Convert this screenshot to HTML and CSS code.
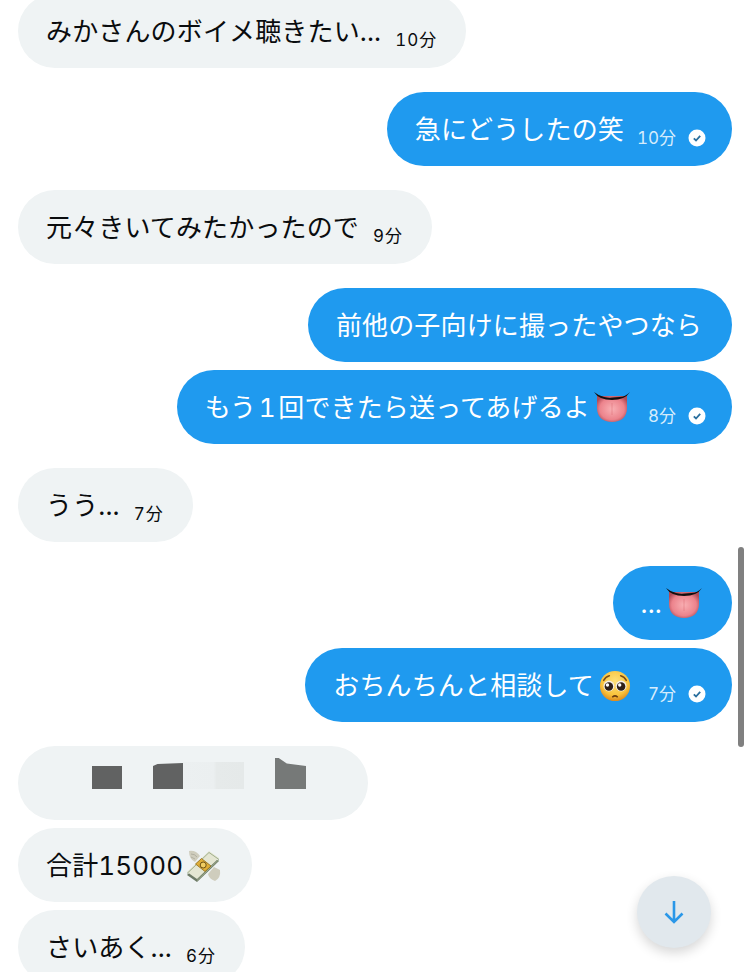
FILE: index.html
```html
<!DOCTYPE html>
<html lang="ja">
<head>
    <meta charset="UTF-8">
    <meta name="viewport" content="width=device-width, initial-scale=1.0">
    <title>メッセージ</title>
    <link rel="stylesheet" href="styles.css">
</head>
<body>
    <svg class="defs" width="0" height="0" aria-hidden="true">
        <defs>
            <radialGradient id="tongueFill" cx="50%" cy="50%" r="58%">
                <stop offset="0" stop-color="#f9b0b4"/>
                <stop offset="0.7" stop-color="#ec838c"/>
                <stop offset="1" stop-color="#b04c58"/>
            </radialGradient>
            <radialGradient id="faceFill" cx="50%" cy="35%" r="65%">
                <stop offset="0" stop-color="#fee27a"/>
                <stop offset="0.7" stop-color="#f9c33c"/>
                <stop offset="1" stop-color="#dc8a1e"/>
            </radialGradient>
            <symbol id="tongue" viewBox="0 0 36 32">
                <path d="M3 5H33V17C33 26 27 31 18 31S3 26 3 17Z" fill="url(#tongueFill)"/>
                <path d="M18 12V24" stroke="#d9666f" stroke-width="1" opacity=".45"/>
                <path d="M0 1Q5 5 10 6T18 6.500T26 6T36 1Q31 9 18 9T0 1Z" fill="#120e0e"/>
            </symbol>
            <symbol id="check" viewBox="0 0 18 18">
                <circle cx="9" cy="9" r="8.5" fill="#fff"/>
                <path d="M5.8 9.4L8 11.5L12.2 6.8" fill="none" stroke="#2a6f9e" stroke-width="1.8"/>
            </symbol>
        </defs>
    </svg>

    <main class="chat">
        <div class="row">
            <div class="bubble in">
                <span class="text">みかさんのボイメ聴きたい...</span>
                <span class="time">10分</span>
            </div>
        </div>
        <div class="row">
            <div class="bubble out">
                <span class="text">急にどうしたの笑</span>
                <span class="time">10分</span>
                <svg class="check"><use href="#check"/></svg>
            </div>
        </div>
        <div class="row">
            <div class="bubble in">
                <span class="text">元々きいてみたかったので</span>
                <span class="time">9分</span>
            </div>
        </div>
        <div class="row group">
            <div class="bubble out">
                <span class="text">前他の子向けに撮ったやつなら</span>
            </div>
            <div class="bubble out">
                <span class="text">もう&#8202;1&#8202;回できたら送ってあげるよ</span>
                <svg class="emoji tongue"><use href="#tongue"/></svg>
                <span class="time">8分</span>
                <svg class="check"><use href="#check"/></svg>
            </div>
        </div>
        <div class="row">
            <div class="bubble in">
                <span class="text">うう...</span>
                <span class="time">7分</span>
            </div>
        </div>
        <div class="row group">
            <div class="bubble out">
                <span class="text">...</span>
                <svg class="emoji tongue"><use href="#tongue"/></svg>
            </div>
            <div class="bubble out">
                <span class="text">おちんちんと相談して</span>
                <svg class="emoji face" viewBox="0 0 34 34">
                    <circle cx="17" cy="17" r="16" fill="url(#faceFill)"/>
                    <path d="M5 11Q7 7 11 6M29 11Q27 7 23 6" fill="none" stroke="#7a4a12" stroke-width="1.6" stroke-linecap="round"/>
                    <circle cx="10.500" cy="17" r="5.800" fill="#f4efe6"/>
                    <circle cx="23.500" cy="17" r="5.800" fill="#f4efe6"/>
                    <circle cx="10.500" cy="17.500" r="4.500" fill="#2f2118"/>
                    <circle cx="23.500" cy="17.500" r="4.500" fill="#2f2118"/>
                    <circle cx="9" cy="16" r="1.800" fill="#fff"/>
                    <circle cx="22" cy="16" r="1.800" fill="#fff"/>
                    <path d="M14.500 28.500Q17 26.500 19.500 28.500" fill="none" stroke="#6b3d10" stroke-width="1.600" stroke-linecap="round"/>
                </svg>
                <span class="time">7分</span>
                <svg class="check"><use href="#check"/></svg>
            </div>
        </div>
        <div class="row group">
            <div class="bubble in redacted">
                <span class="block"></span>
                <span class="block second"></span>
                <span class="smear"></span>
                <span class="block third"></span>
            </div>
            <div class="bubble in">
                <span class="text">合計15000</span>
                <svg class="emoji money" viewBox="0 0 36 34">
                    <path d="M4 2Q11 1 15 7L10 13Q4 10 4 2Z" fill="#cfcdbd"/>
                    <path d="M6 5Q10 5 12 8M6 8Q8 9 10 10" fill="none" stroke="#a9a798" stroke-width=".8"/>
                    <path d="M35 21Q36 29 30 32Q24 30 23 25L29 18Z" fill="#cfcdbd"/>
                    <path d="M2 26L24 5L34 12L12 33Z" fill="#6d7a66"/>
                    <path d="M2 23L24 2L34 9L12 30Z" fill="#e4e6d2"/>
                    <path d="M2 24.500L24 3.500L34 10.500L12 31.500" fill="none" stroke="#9fae8c" stroke-width="1"/>
                    <path d="M10.500 15L16.500 9.500L26 17L20 22.500Z" fill="#dfae38" stroke="#8d6a18" stroke-width=".8"/>
                    <circle cx="18.200" cy="16" r="3" fill="#f0cd62" stroke="#6e5214" stroke-width="1"/>
                </svg>
            </div>
            <div class="bubble in">
                <span class="text">さいあく...</span>
                <span class="time">6分</span>
            </div>
        </div>
    </main>

    <div class="scrollbar"></div>
    <button class="to-bottom" aria-label="一番下へ">
        <svg width="24" height="24" viewBox="0 0 24 24">
            <path d="M12 1V22M3.500 13.500L12 22L20.500 13.500" fill="none" stroke="#2a97e8" stroke-width="2.600"/>
        </svg>
    </button>
</body>
</html>
```

FILE: styles.css
```css
html, body {
    margin: 0;
    height: 972px;
    overflow: hidden;
    background: #fff;
}
body {
    position: relative;
    font-family: Inter, "Noto Sans CJK JP", sans-serif;
    font-variant-numeric: tabular-nums;
    color: #0a0c0e;
}
.defs {
    position: absolute;
}
.chat {
    display: flex;
    flex-direction: column;
    gap: 24px;
    margin-top: -6px;
    padding: 0 18px;
    width: 714px;
}
.row {
    display: flex;
    flex-direction: column;
    gap: 8px;
}
.bubble {
    display: flex;
    align-items: center;
    height: 74px;
    box-sizing: border-box;
    padding: 0 30px 0 28px;
    border-radius: 37px;
    width: fit-content;
}
.in {
    align-self: flex-start;
    background: #eff3f4;
    padding-right: 29px;
}
.out {
    align-self: flex-end;
    background: #1f9aef;
    color: #fff;
}
.text {
    margin-top: 2px;
    font-size: 26px;
    line-height: 34px;
    letter-spacing: 0.15px;
    white-space: nowrap;
}
.time {
    margin: 18px 0 0 14px;
    font-size: 17px;
    line-height: 20px;
    letter-spacing: 1px;
    white-space: nowrap;
}
.out .time {
    margin-left: 13px;
    letter-spacing: 0;
    color: #d5ecfc;
}
.check {
    width: 18px;
    height: 18px;
    margin: 18px -4px 0 12px;
}
.emoji {
    width: 34px;
    height: 34px;
    flex: none;
}
.tongue {
    width: 36px;
    height: 32px;
    margin: 0 0 0 4px;
}
.out .tongue + .time {
    margin-left: 18px;
}
.face {
    margin: 2px 0 0 5px;
    width: 32px;
    height: 32px;
}
.out .face + .time {
    margin-left: 17px;
}
.money {
    width: 36px;
    height: 34px;
    margin: 1px 2px 0 2px;
}
.redacted {
    width: 350px;
    padding: 0 0 31px 74px;
    align-items: flex-end;
}
.block {
    width: 30px;
    height: 23px;
    background: #616262;
    margin-right: 31px;
}
.block.second {
    height: 26px;
    margin-right: 0;
    clip-path: polygon(0 12%, 15% 4%, 100% 0, 100% 100%, 0 100%);
}
.smear {
    width: 61px;
    height: 27px;
    margin-right: 31px;
    background: linear-gradient(90deg, #ecf0f1 0, #ebeff0 50%, #e6eaea 55%, #e5e9e9 100%);
}
.block.third {
    width: 31px;
    height: 31px;
    background: #767978;
    clip-path: polygon(0 0, 12% 0, 38% 18%, 100% 26%, 100% 100%, 0 100%);
}
.scrollbar {
    position: absolute;
    left: 738px;
    top: 547px;
    width: 6px;
    height: 200px;
    border-radius: 3px;
    background: #808080;
}
.to-bottom {
    position: absolute;
    left: 637px;
    top: 876px;
    width: 74px;
    height: 72px;
    display: flex;
    align-items: center;
    justify-content: center;
    padding: 0;
    border: none;
    border-radius: 50%;
    background: #e1e8ed;
    box-shadow: 0 5px 12px rgba(0, 0, 0, 0.16);
}
```
